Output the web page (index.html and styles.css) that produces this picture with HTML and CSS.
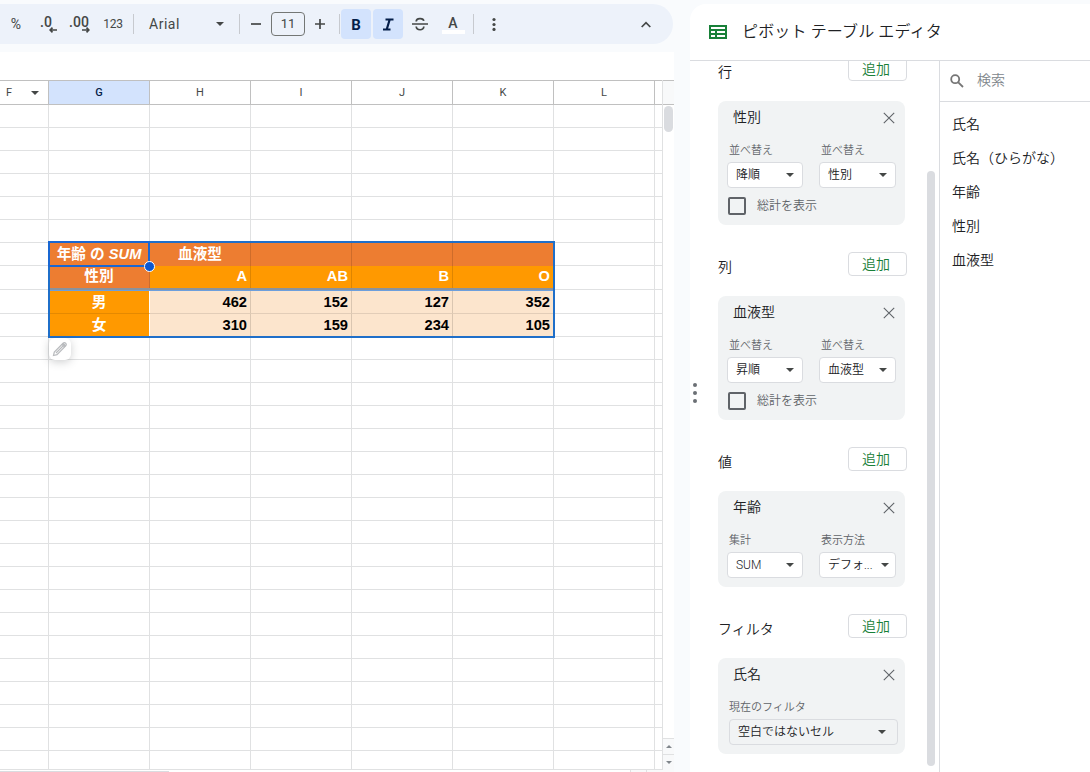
FILE: index.html
```html
<!DOCTYPE html>
<html lang="ja">

<head>
  <meta charset="utf-8">
  <meta name="viewport" content="width=device-width">
  <title>ピボット テーブル エディタ</title>
  <link rel="stylesheet" href="styles.css">
</head>

<body>

  <div class="app">

    <main class="main">

      <!-- Toolbar -->
      <div class="toolbar">
        <div class="tool percent">%</div>
        <div class="tool decimal">
          <span>.0</span>
          <svg class="arrow" width="8" height="6" viewBox="0 0 8 6"><path d="M8 3H1.5M3.5 .6L1.2 3l2.3 2.4" /></svg>
        </div>
        <div class="tool decimal">
          <span>.00</span>
          <svg class="arrow" width="8" height="6" viewBox="0 0 8 6"><path d="M0 3h6.5M4.5 .6L6.8 3 4.5 5.4" /></svg>
        </div>
        <div class="tool number">123</div>
        <div class="divider"></div>
        <div class="font-name"><span>Arial</span><i class="caret"></i></div>
        <div class="divider"></div>
        <div class="tool minus">
          <svg width="12" height="12" viewBox="0 0 12 12"><path d="M1 6h10" /></svg>
        </div>
        <div class="font-size">11</div>
        <div class="tool plus">
          <svg width="12" height="12" viewBox="0 0 12 12"><path d="M1 6h10M6 1v10" /></svg>
        </div>
        <div class="divider"></div>
        <div class="tool active bold">B</div>
        <div class="tool active">
          <svg width="12" height="14" viewBox="0 0 12 14"><path class="thick" d="M3.500 2.500H11.500M1 12.500h7.500M7.700 2.500L4.700 12.500" /></svg>
        </div>
        <div class="tool">
          <svg width="16" height="14" viewBox="0 0 16 14"><path d="M0 7h16M4.200 4.600C4.200 .9 11.300 .8 11.800 3.900M4.200 9.500c.3 4.400 7.800 4.300 7.600 0" /></svg>
        </div>
        <div class="tool text-color"><span>A</span></div>
        <div class="divider"></div>
        <div class="tool more">
          <svg width="4" height="14" viewBox="0 0 4 14"><circle cx="2" cy="2.500" r="1.600" /><circle cx="2" cy="7.500" r="1.600" /><circle cx="2" cy="12.400" r="1.600" /></svg>
        </div>
        <div class="tool collapse">
          <svg width="10" height="7" viewBox="0 0 10 7"><path d="M.7 6L5 1.600 9.300 6" /></svg>
        </div>
      </div>

      <div class="formula-bar"></div>

      <!-- Spreadsheet -->
      <div class="sheet">
        <div class="grid">
          <div class="row head">
            <div class="col-f">F<i class="caret"></i></div>
            <div class="selected">G</div>
            <div>H</div>
            <div>I</div>
            <div>J</div>
            <div>K</div>
            <div>L</div>
            <div></div>
          </div>
          <div class="row"></div>
          <div class="row"></div>
          <div class="row"></div>
          <div class="row"></div>
          <div class="row"></div>
          <div class="row"></div>

          <div class="pivot-area">
            <div class="row pivot top">
              <div></div>
              <div class="corner">年齢 の <em>SUM</em></div>
              <div class="center">血液型</div>
              <div></div>
              <div></div>
              <div></div>
            </div>
            <div class="row pivot names">
              <div></div>
              <div class="corner">性別</div>
              <div>A</div>
              <div>AB</div>
              <div>B</div>
              <div>O</div>
            </div>
            <div class="row pivot values tall">
              <div></div>
              <div class="label">男</div>
              <div>462</div>
              <div>152</div>
              <div>127</div>
              <div>352</div>
            </div>
            <div class="row pivot values">
              <div></div>
              <div class="label">女</div>
              <div>310</div>
              <div>159</div>
              <div>234</div>
              <div>105</div>
            </div>
            <div class="frozen-line"></div>
            <div class="range"></div>
            <div class="cursor"><i></i></div>
            <div class="edit">
              <svg width="16" height="16" viewBox="0 0 16 16"><path d="M1.500 14.500l.8-3.500L11.300 2c1.600-1.300 3.900 1 2.600 2.600L5 13.700zM4 12L11 5" /><path class="tip" d="M10.500 2.800l2.700 2.700" /></svg>
            </div>
          </div>

          <div class="row"></div>
          <div class="row"></div>
          <div class="row"></div>
          <div class="row"></div>
          <div class="row"></div>
          <div class="row"></div>
          <div class="row"></div>
          <div class="row"></div>
          <div class="row"></div>
          <div class="row"></div>
          <div class="row"></div>
          <div class="row"></div>
          <div class="row"></div>
          <div class="row"></div>
          <div class="row"></div>
          <div class="row"></div>
          <div class="row"></div>
          <div class="row"></div>
          <div class="row last"></div>
        </div>

        <div class="scroll">
          <div class="scroll-top"></div>
          <div class="scroll-thumb"></div>
          <div class="scroll-btn"><i class="up"></i></div>
          <div class="scroll-btn"><i class="down"></i></div>
        </div>
      </div>
      <div class="scroll-x">
        <div class="scroll-x-thumb"></div>
        <div class="scroll-x-btns"><i></i><i></i></div>
      </div>
    </main>

    <!-- Pivot table editor -->
    <aside class="panel">
      <header class="panel-head">
        <svg width="18" height="14" viewBox="0 0 18 14"><path fill="#188038" fill-rule="evenodd" d="M0 0h18v14H0zM2 2v2h14V2zM2 6v2h4V6zM8 6v2h8V6zM2 10v2h4v-2zM8 10v2h8v-2z" /></svg>
        <h1>ピボット テーブル エディタ</h1>
      </header>

      <div class="panel-body">
        <div class="drag"><i></i><i></i><i></i></div>

        <div class="editor">
          <section>
            <div class="section-head"><h2>行</h2><button>追加</button></div>
            <div class="card">
              <div class="card-head">性別<svg class="close" width="12" height="12" viewBox="0 0 12 12"><path d="M.8 .8l10.400 10.400M11.200 .8L.8 11.200" /></svg></div>
              <div class="fields">
                <label>並べ替え<span class="select">降順<i class="caret"></i></span></label>
                <label>並べ替え<span class="select">性別<i class="caret"></i></span></label>
              </div>
              <div class="check"><span class="box"></span>総計を表示</div>
            </div>
          </section>

          <section>
            <div class="section-head"><h2>列</h2><button>追加</button></div>
            <div class="card">
              <div class="card-head">血液型<svg class="close" width="12" height="12" viewBox="0 0 12 12"><path d="M.8 .8l10.400 10.400M11.200 .8L.8 11.200" /></svg></div>
              <div class="fields">
                <label>並べ替え<span class="select">昇順<i class="caret"></i></span></label>
                <label>並べ替え<span class="select">血液型<i class="caret"></i></span></label>
              </div>
              <div class="check"><span class="box"></span>総計を表示</div>
            </div>
          </section>

          <section>
            <div class="section-head"><h2>値</h2><button>追加</button></div>
            <div class="card short">
              <div class="card-head">年齢<svg class="close" width="12" height="12" viewBox="0 0 12 12"><path d="M.8 .8l10.400 10.400M11.200 .8L.8 11.200" /></svg></div>
              <div class="fields">
                <label>集計<span class="select">SUM<i class="caret"></i></span></label>
                <label>表示方法<span class="select narrow">デフォ...<i class="caret"></i></span></label>
              </div>
            </div>
          </section>

          <section>
            <div class="section-head"><h2>フィルタ</h2><button>追加</button></div>
            <div class="card short">
              <div class="card-head">氏名<svg class="close" width="12" height="12" viewBox="0 0 12 12"><path d="M.8 .8l10.400 10.400M11.200 .8L.8 11.200" /></svg></div>
              <div class="fields filter">
                <label>現在のフィルタ<span class="select">空白ではないセル<i class="caret"></i></span></label>
              </div>
            </div>
          </section>
        </div>

        <div class="panel-scroll"></div>

        <div class="columns">
          <div class="search">
            <svg width="14" height="14" viewBox="0 0 14 14"><circle cx="5.200" cy="5.200" r="4" /><path d="M8.300 8.300l4.700 4.700" /></svg>
            <span>検索</span>
          </div>
          <ul>
            <li>氏名</li>
            <li>氏名（ひらがな）</li>
            <li>年齢</li>
            <li>性別</li>
            <li>血液型</li>
          </ul>
        </div>
      </div>
    </aside>

  </div>

</body>

</html>
```
FILE: styles.css
```css
* {
  box-sizing: border-box;
}

body {
  margin: 0;
  background: #f9fbfd;
  color: #202124;
  font-family: Roboto, "Noto Sans CJK JP", sans-serif;
  overflow: hidden;
}

svg {
  display: block;
  flex: none;
}

.app {
  display: flex;
  width: 1090px;
  height: 772px;
}

.main {
  width: 674px;
  margin-right: 16px;
  display: flex;
  flex-direction: column;
}

.caret {
  width: 0;
  height: 0;
  border: 4px solid transparent;
  border-top: 4px solid #444746;
  border-bottom: 0;
}

/* Toolbar */
.toolbar {
  width: 673px;
  height: 40px;
  margin: 4px 0 8px;
  background: #edf2fa;
  border-radius: 0 20px 20px 0;
  display: flex;
  align-items: center;
  color: #444746;
}

.tool {
  width: 30px;
  height: 30px;
  margin: 0 1px;
  border-radius: 4px;
  display: flex;
  align-items: center;
  justify-content: center;
  font-size: 12px;
  flex: none;
}

.tool path {
  fill: none;
  stroke: #444746;
  stroke-width: 1.7;
}

.tool .thick {
  stroke: #041e49;
  stroke-width: 2.2;
}

.percent {
  margin-left: 0;
  padding-left: 2px;
  font-size: 14px;
}

.decimal {
  position: relative;
  width: 31px;
  font-size: 14px;
  font-weight: 500;
  padding: 0 3px 4px 0;
}

.decimal .arrow {
  position: absolute;
  right: 6px;
  bottom: 6px;
}

.number {
  width: 34px;
  padding-right: 4px;
  letter-spacing: -0.3px;
}

.divider {
  width: 1px;
  height: 20px;
  background: #c7cacf;
  flex: none;
}

.font-name {
  width: 105px;
  padding: 0 15px;
  display: flex;
  align-items: center;
  justify-content: space-between;
  font-size: 14px;
  letter-spacing: 0.5px;
}

.minus {
  width: 29px;
}

.font-size {
  width: 34px;
  height: 24px;
  border: 1px solid #747775;
  border-radius: 4px;
  font-size: 13px;
  line-height: 22px;
  text-align: center;
}

.plus {
  width: 30px;
  margin: 0 4px 0 0;
}

.tool.active {
  background: #d3e3fd;
  color: #041e49;
}

.bold {
  font-size: 15px;
  font-weight: 700;
  padding-top: 1px;
}

.text-color {
  position: relative;
  margin: 0 5px 0 2px;
  font-size: 14px;
  font-weight: 500;
  padding-bottom: 3px;
}

.text-color::after {
  content: "";
  position: absolute;
  left: 4px;
  bottom: 5px;
  width: 23px;
  height: 4px;
  background: #fff;
}

.more {
  margin-left: 5px;
  fill: #444746;
}

.collapse {
  margin: 0 12px 0 auto;
  padding-top: 1px;
}

.formula-bar {
  height: 28px;
  background: #fff;
}

/* Spreadsheet */
.sheet {
  height: 690px;
  display: flex;
  background: #fff;
}

.grid {
  width: 662px;
}

.row {
  height: 23px;
  display: grid;
  grid-template-columns: 49px repeat(6, 101px) 7px;
  grid-template-rows: 100%;
  border-bottom: 1px solid #e0e1e2;
  background: linear-gradient(to right, transparent 100px, #e0e1e2 100px) -52px 0 / 101px 100%;
}

.row.head {
  height: 25px;
  border-top: 1px solid #c0c0c0;
  border-bottom: 1px solid #c0c0c0;
  background: #fff;
  font-size: 11px;
  line-height: 23px;
  text-align: center;
  color: #444746;
}

.head > div {
  border-right: 1px solid #c0c0c0;
}

.head > div:last-child {
  border-right: 0;
}

.head .selected {
  background: #d3e3fd;
  color: #041e49;
  font-weight: 500;
}

.col-f {
  display: flex;
  align-items: center;
  justify-content: space-between;
  padding: 0 9px 0 6px;
}

.row.last {
  height: 19px;
}

.pivot-area {
  position: relative;
}

.row.pivot {
  font: bold 14.67px "Liberation Sans", "Noto Sans CJK JP", sans-serif;
  line-height: 22px;
  text-align: right;
}

/* cells cover the row's own line */
.pivot > div + div {
  margin-bottom: -1px;
  padding-right: 3px;
  border-right: 1px solid rgba(0, 0, 0, 0.13);
  border-bottom: 1px solid rgba(0, 0, 0, 0.1);
  white-space: nowrap;
}

.row.names,
.row.values.tall {
  height: 24px;
}

.top > div + div {
  background: #ed7d31;
  color: #fff;
  border-bottom: 0;
}

.names > div + div {
  background: #ff9900;
  color: #fff;
  line-height: 20px;
  border-bottom: 0;
}

.names > .corner.corner {
  background: #ed7d31;
}

.values > div + div {
  background: #fce5cd;
  color: #000;
  line-height: 23px;
}

.values.tall > div + div {
  line-height: 25px;
}

.pivot > .label.label {
  background: #ff9900;
  color: #fff;
  text-align: center;
  padding: 0;
  border-right-color: #fff;
}

.pivot > .corner.corner,
.pivot > .center.center {
  text-align: center;
  padding: 0;
}

.frozen-line {
  position: absolute;
  left: 49px;
  top: 45px;
  width: 505px;
  height: 3px;
  background: #8b929c;
  border-bottom: 1px solid #6d9fdc;
}

.range {
  position: absolute;
  left: 48px;
  top: -2px;
  width: 507px;
  height: 97px;
  border: 2px solid #1f6fc9;
}

.cursor {
  position: absolute;
  left: 48px;
  top: -2px;
  width: 102px;
  height: 26px;
  border: 2px solid #1967d2;
}

.cursor i {
  position: absolute;
  right: -7px;
  bottom: -7px;
  width: 11px;
  height: 11px;
  border: 1px solid #fff;
  border-radius: 50%;
  background: #0b57d0;
}

.edit {
  position: absolute;
  left: 49px;
  top: 95px;
  width: 22px;
  height: 22px;
  border-radius: 6px;
  background: #fff;
  box-shadow: 0 2px 8px rgba(60, 64, 67, 0.25);
  padding: 3px;
}

.edit path {
  fill: none;
  stroke: #b9bbbe;
  stroke-width: 1.2;
}

.edit .tip {
  stroke-width: 3;
}

/* Sheet scrollbars */
.scroll {
  width: 12px;
  border-left: 1px solid #e0e1e2;
  display: flex;
  flex-direction: column;
}

.scroll-top {
  height: 25px;
  background: #f8f9fa;
  border-top: 1px solid #c0c0c0;
  border-bottom: 1px solid #c0c0c0;
}

.scroll-thumb {
  width: 9px;
  height: 26px;
  margin: 1px 1px auto;
  border-radius: 5px;
  background: #dadce0;
}

.scroll-btn {
  height: 16px;
  border-top: 1px solid #e0e1e2;
  background: #f8f9fa;
  display: flex;
  align-items: center;
  justify-content: center;
}

.up,
.down {
  border: 3px solid transparent;
}

.up {
  border-top: 0;
  border-bottom: 3px solid #80868b;
}

.down {
  border-bottom: 0;
  border-top: 3px solid #80868b;
}

.scroll-x {
  height: 2px;
  background: #fff;
  display: flex;
  justify-content: space-between;
}

.scroll-x-thumb {
  width: 169px;
  height: 1px;
  margin-top: 1px;
  background: #dadce0;
}

.scroll-x-btns {
  width: 44px;
  background: #f8f9fa;
  display: flex;
}

.scroll-x-btns i {
  width: 16px;
  border-left: 1px solid #e0e1e2;
}

/* Pivot editor panel */
.panel {
  width: 400px;
  margin-top: 4px;
  background: #fff;
  border-radius: 16px 0 0 0;
  font-weight: 350;
}

.panel-head {
  height: 57px;
  padding: 0 0 1px 19px;
  border-bottom: 1px solid #dadce0;
  display: flex;
  align-items: center;
  gap: 15px;
}

.panel-head h1 {
  margin: 0 0 3px;
  font-size: 16px;
  font-weight: 350;
  letter-spacing: 0.15px;
}

.panel-body {
  height: 711px;
  display: flex;
  overflow: hidden;
}

.drag {
  width: 28px;
  padding: 322px 0 0 3px;
}

.drag i {
  display: block;
  width: 4px;
  height: 4px;
  margin-bottom: 4px;
  border-radius: 50%;
  background: #6b6f74;
}

.editor {
  width: 189px;
  margin-top: -4px;
}

section {
  margin-bottom: 27px;
}

.section-head {
  height: 24px;
  display: flex;
  align-items: center;
  justify-content: space-between;
}

h2 {
  margin: 3px 0 0;
  font-size: 14px;
  font-weight: 350;
}

button {
  width: 59px;
  height: 24px;
  padding: 0 3px 1px 0;
  border: 1px solid #dadce0;
  border-radius: 4px;
  background: #fff;
  color: #188038;
  font: 350 14px/20px Roboto, "Noto Sans CJK JP", sans-serif;
}

.card {
  width: 187px;
  height: 124px;
  margin-top: 20px;
  padding: 5px 8px 0 9px;
  background: #f1f3f4;
  border-radius: 8px;
}

.card.short {
  height: 96px;
}

.card-head {
  height: 22px;
  padding: 0 2px 0 6px;
  display: flex;
  align-items: center;
  justify-content: space-between;
  font-size: 14px;
  line-height: 20px;
}

.close {
  margin-top: 1px;
}

.close path {
  fill: none;
  stroke: #5f6368;
  stroke-width: 1.1;
}

.fields {
  display: flex;
  gap: 16px;
  margin: 14px 0 0;
}

.fields label {
  width: 77px;
  font-size: 11px;
  line-height: 18px;
  color: #5f6368;
  text-indent: 2px;
}

.fields label:first-child {
  width: 76px;
}

.select {
  height: 26px;
  margin-top: 2px;
  padding: 0 8px;
  border: 1px solid #dadce0;
  border-radius: 4px;
  background: #fff;
  display: flex;
  align-items: center;
  justify-content: space-between;
  font-size: 12px;
  color: #202124;
  text-indent: 0;
}

.select.narrow {
  padding-right: 6px;
}

.filter {
  margin-right: -1px;
}

.fields.filter label {
  width: 171px;
}

.filter .select {
  margin-left: 2px;
  padding-right: 11px;
  background: transparent;
}

.check {
  display: flex;
  align-items: center;
  gap: 11px;
  margin: 9px 0 0 1px;
  font-size: 12px;
  line-height: 18px;
  color: #5f6368;
}

.box {
  width: 18px;
  height: 18px;
  border: 2px solid #5f6368;
  border-radius: 2px;
}

.panel-scroll {
  width: 8px;
  height: 595px;
  margin: 110px 4px 0 20px;
  border-radius: 4px;
  background: #dadce0;
}

.columns {
  flex: 1;
  border-left: 1px solid #dadce0;
}

.search {
  height: 41px;
  padding-left: 10px;
  border-bottom: 1px solid #dadce0;
  display: flex;
  align-items: center;
  gap: 13px;
  font-size: 14px;
  color: #80868b;
}

.search span {
  margin-bottom: 4px;
}

.search svg {
  fill: none;
  stroke: #757575;
  stroke-width: 1.8;
}

ul {
  margin: 5px 0 0;
  padding: 0 0 0 12px;
  list-style: none;
}

li {
  height: 34px;
  font-size: 14px;
  line-height: 34px;
}
```
